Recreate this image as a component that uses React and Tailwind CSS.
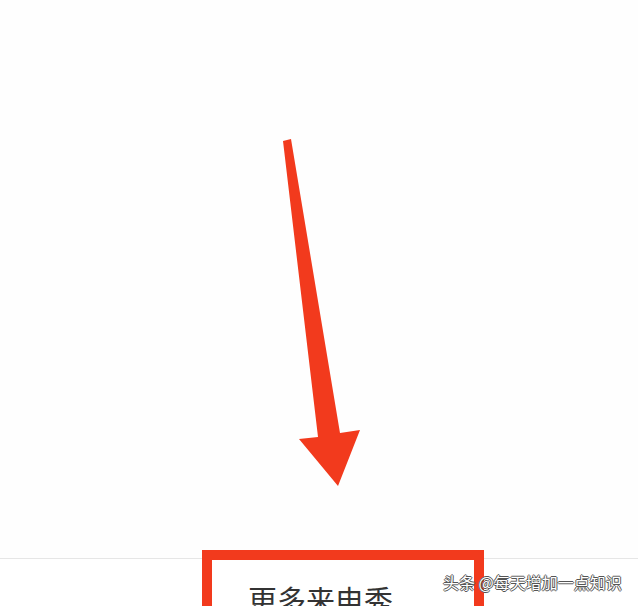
import React from "react";

const cjk = { fontFamily: '"Noto Sans CJK SC", "Noto Sans", sans-serif' };

export default function App() {
  return (
    <div className="relative w-[638px] h-[606px] overflow-hidden bg-white" style={cjk}>
      {/* upper blank area */}
      <div className="h-[559px] border-b border-[#e6e6e6] bg-[#fefefe]" />

      {/* list row */}
      <div className="pl-[248px] pt-[24px]">
        <div className="text-[29px] leading-[32px] text-[#333333] tracking-[0px]">更多来电秀</div>
      </div>

      {/* annotation arrow */}
      <svg className="absolute left-0 top-0" width="638" height="606" viewBox="0 0 638 606">
        <polygon
          points="283,141 291,139 340,433 360,430 338,486 299,439 318,437"
          fill="#f23a1d"
        />
      </svg>

      {/* annotation box */}
      <div className="absolute left-[202px] top-[550px] w-[282px] h-[90px] border-[10px] border-[#f23a1d]" />

      {/* watermark */}
      <div className="absolute left-[443px] top-[572px] text-[16px] leading-[20px] text-white [text-shadow:1px_0_0_#555,-1px_0_0_#555,0_1px_0_#555,0_-1px_0_#555]">
        头条 @每天增加一点知识
      </div>
    </div>
  );
}
